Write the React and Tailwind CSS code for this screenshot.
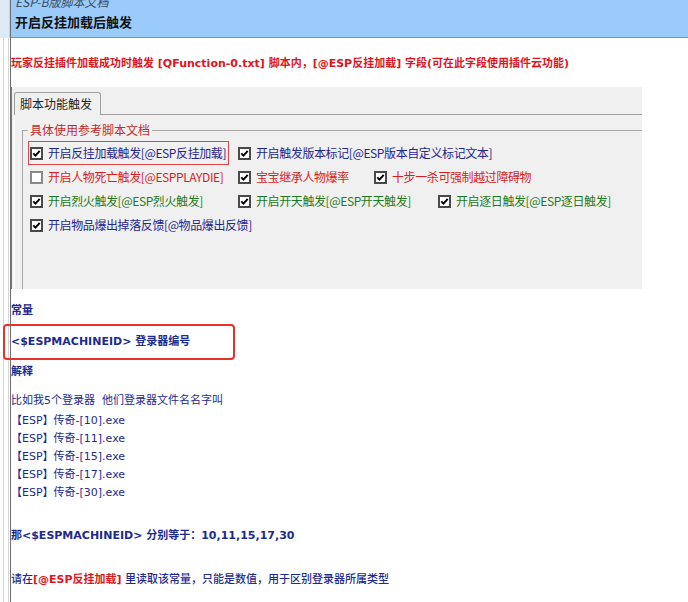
import React from "react";

const cjk = "font-['Noto_Sans_CJK_SC',sans-serif]";
const body = "font-['DejaVu_Sans','Noto_Sans_CJK_SC',sans-serif]";

const tone = {
  navy: "text-[#25258f]",
  red: "text-[#d81e1e]",
  green: "text-[#1f7a1f]",
};

function Check({ checked }) {
  return (
    <span
      className={`w-[13px] h-[13px] border-2 bg-white flex items-center justify-center shrink-0 ${
        checked ? "border-[#4a4a4a]" : "border-[#8a8a8a]"
      }`}
    >
      {checked && (
        <svg width="9" height="9" viewBox="0 0 9 9">
          <path d="M1.3 4.4L3.5 6.7L7.7 1.9" fill="none" stroke="#000" strokeWidth="1.9" />
        </svg>
      )}
    </span>
  );
}

function Item({ checked = true, color, focus, children }) {
  return (
    <div
      className={`flex items-center h-[24px] w-fit pl-[1px] pr-[2px] border ${
        focus ? "border-[#e04848]" : "border-transparent"
      }`}
    >
      <Check checked={checked} />
      <span className={`ml-[5px] text-[12px] leading-[16px] tracking-[-0.4px] whitespace-nowrap ${tone[color]}`}>
        {children}
      </span>
    </div>
  );
}

const exeList = ["10", "11", "15", "17", "30"];

export default function App() {
  return (
    <div className={`relative flex w-[688px] h-[602px] overflow-hidden bg-white ${cjk}`}>
      {/* left splitter strip */}
      <div className="w-[11px] shrink-0 flex flex-col border-r border-[#6e6e6e]">
        <div className="h-[38px] bg-[#dce9f6] border-r border-[#c6d3e0]" />
        <div className="flex-1 ml-[3px] border-l border-[#b4b4b4] border-r border-[#d6d6d6] mr-[1px]" />
      </div>

      <div className="flex-1 flex flex-col">
        {/* header */}
        <div className="h-[38px] shrink-0 bg-[#9acbfb] border-b border-[#7896b2] pl-[4px] overflow-hidden">
          <div className="mt-[-5px] text-[12px] leading-[14px] italic text-[#3b4d60]">ESP-B版脚本文档</div>
          <div className="mt-[4px] text-[13px] leading-[18px] font-bold text-[#111]">开启反挂加载后触发</div>
        </div>

        <div className={`mt-[18px] text-[11px] leading-[16px] font-bold text-[#e0141c] whitespace-nowrap ${body}`}>
          玩家反挂插件加载成功时触发 [QFunction-0.txt] 脚本内，[@ESP反挂加载] 字段(可在此字段使用插件云功能)
        </div>

        {/* tab panel */}
        <div className="mt-[15px] w-[631px] h-[202px] bg-[#f0f0f0] border-l border-[#7a7a7a] pl-[1px] pt-[5px] flex flex-col">
          <div className="flex items-end">
            <div className="ml-[1px] h-[23px] border border-b-0 border-[#a0a0a0] rounded-t-[3px] bg-[#f0f0f0] pl-[5px] pr-[8px] flex items-center text-[12px] text-[#222]">
              脚本功能触发
            </div>
            <div className="flex-1 border-b border-[#a0a0a0]" />
          </div>

          <div className="flex-1 flex ml-[1px] border-l border-white">
            <fieldset className="mt-[7px] ml-[7px] flex-1 border-t border-l border-[#a8a8a8] pl-[5px] pt-[3px]">
              <legend className="px-[2px] text-[12px] leading-[16px] text-[#c42a2a]">具体使用参考脚本文档</legend>

              <div className="flex">
                <div className="w-[208px]">
                  <Item color="navy" focus>开启反挂加载触发[@ESP反挂加载]</Item>
                </div>
                <Item color="navy">开启触发版本标记[@ESP版本自定义标记文本]</Item>
              </div>

              <div className="flex">
                <div className="w-[208px]">
                  <Item color="red" checked={false}>开启人物死亡触发[@ESPPLAYDIE]</Item>
                </div>
                <div className="w-[136px]">
                  <Item color="red">宝宝继承人物爆率</Item>
                </div>
                <Item color="red">十步一杀可强制越过障碍物</Item>
              </div>

              <div className="flex">
                <div className="w-[208px]">
                  <Item color="green">开启烈火触发[@ESP烈火触发]</Item>
                </div>
                <div className="w-[200px]">
                  <Item color="green">开启开天触发[@ESP开天触发]</Item>
                </div>
                <Item color="green">开启逐日触发[@ESP逐日触发]</Item>
              </div>

              <div className="flex">
                <Item color="navy">开启物品爆出掉落反馈[@物品爆出反馈]</Item>
              </div>
            </fieldset>
          </div>
        </div>

        {/* constants doc */}
        <div className={`${body} text-[11px] leading-[14px] text-[#1e2a8e] whitespace-pre`}>
          <div className="mt-[15px] font-bold">常量</div>
          <div className="mt-[17px] font-bold">&lt;$ESPMACHINEID&gt; 登录器编号</div>
          <div className="mt-[16px] font-bold">解释</div>
          <div className="mt-[15px]">比如我5个登录器  他们登录器文件名名字叫</div>
          <div className="mt-[4px]">
            {exeList.map((n) => (
              <div key={n} className="leading-[18px]">
                【ESP】传奇-[{n}].exe
              </div>
            ))}
          </div>
          <div className="mt-[27px] font-bold">那&lt;$ESPMACHINEID&gt; 分别等于：10,11,15,17,30</div>
          <div className="mt-[30px] font-medium">
            请在<span className="font-bold text-[#e0141c]">[@ESP反挂加载]</span> 里读取该常量，只能是数值，用于区别登录器所属类型
          </div>
        </div>
      </div>

      {/* red annotation box over the screenshot */}
      <div className="absolute left-[3px] top-[324px] w-[232px] h-[36px] border-2 border-[#e5332a] rounded-[4px] pointer-events-none" />
    </div>
  );
}
